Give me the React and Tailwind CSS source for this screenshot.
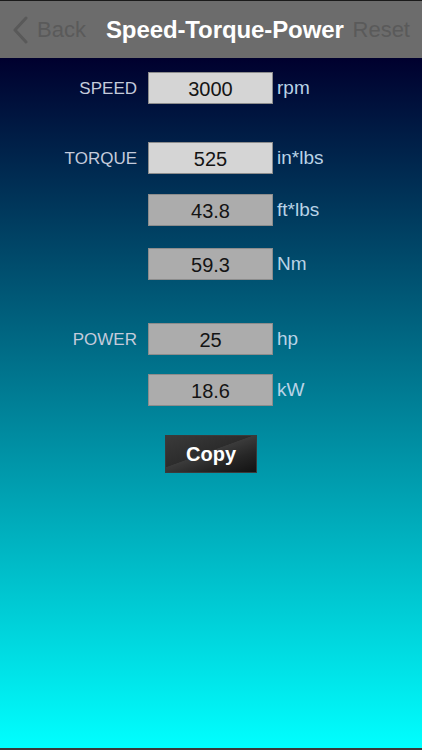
import React from "react";

const font = { fontFamily: '"Liberation Sans", Arial, sans-serif' };

function Row({ label, value, unit, light, className = "" }) {
  return (
    <div className={"flex items-center h-[32px] " + className}>
      <div className="w-[148px] pr-[11px] text-right text-[17px] text-[#c4cbdb] pt-[1px]">{label}</div>
      <div
        className={
          "w-[125px] h-[32px] border border-[#8c8c8c] flex items-center justify-center text-[20px] text-[#141414] pt-[1px] " +
          (light ? "bg-[#d5d5d5]" : "bg-[#acacac]")
        }
      >
        {value}
      </div>
      <div className="pl-[4px] text-[19px] text-[#b9d3e6]">{unit}</div>
    </div>
  );
}

export default function App() {
  return (
    <div className="w-[422px] h-[750px] flex flex-col bg-black overflow-hidden" style={font}>
      <div className="h-[1px] bg-[#1a1a1a]" />
      <div className="h-[57px] bg-[#6c6c6c] flex items-center pl-[12px] pr-[12px]">
        <svg width="16" height="28" viewBox="0 0 16 28" className="mt-[1px]">
          <path d="M14 2 L3 14 L14 26" fill="none" stroke="#595959" strokeWidth="3" strokeLinecap="round" strokeLinejoin="round" />
        </svg>
        <span className="ml-[9px] text-[22px] text-[#5a5a5a]">Back</span>
        <span className="ml-[20px] text-[24px] font-bold text-white tracking-[-0.1px]">Speed-Torque-Power</span>
        <span className="ml-auto text-[22px] text-[#5a5a5a]">Reset</span>
      </div>
      <div className="flex-1 flex flex-col bg-[linear-gradient(to_bottom,#00002e,#00ffff)] pt-[14px]">
        <Row label="SPEED" value="3000" unit="rpm" light />
        <Row label="TORQUE" value="525" unit="in*lbs" light className="mt-[38px]" />
        <Row label="" value="43.8" unit="ft*lbs" className="mt-[20px]" />
        <Row label="" value="59.3" unit="Nm" className="mt-[22px]" />
        <Row label="POWER" value="25" unit="hp" className="mt-[43px]" />
        <Row label="" value="18.6" unit="kW" className="mt-[19px]" />
        <div className="mt-[29px] ml-[165px] w-[92px] h-[38px] border border-[#3a3a3a] flex items-center justify-center text-white text-[20px] font-bold bg-[linear-gradient(160deg,#3a3a3a_0%,#2c2c2c_45%,#3b3b3b_46%,#262626_70%,#121212_100%)]">
          Copy
        </div>
      </div>
      <div className="h-[2px] bg-[#3a3a3a]" />
    </div>
  );
}
